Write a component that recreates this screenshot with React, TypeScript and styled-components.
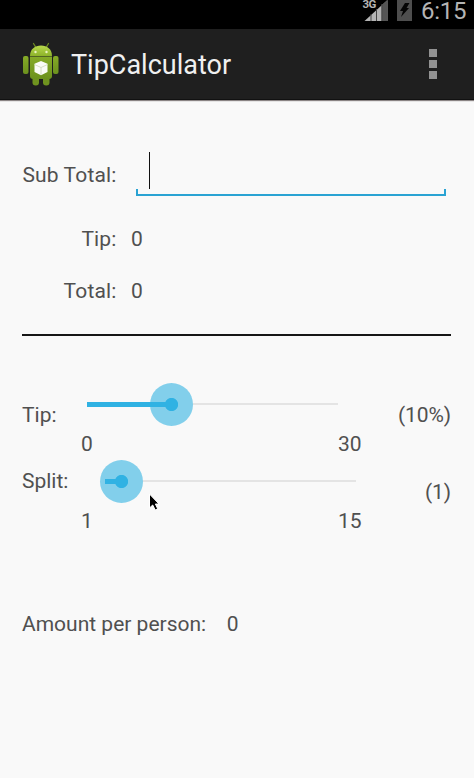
import React from 'react';
import styled, { createGlobalStyle } from 'styled-components';

const GlobalStyle = createGlobalStyle`
  * { box-sizing: border-box; }
  body { margin: 0; background: #f9f9f9; overflow: hidden; }
`;

const Screen = styled.div`
  position: relative;
  display: flex;
  flex-direction: column;
  width: 474px;
  height: 778px;
  background: #f9f9f9;
  color: #505050;
  font: 21px/26px Roboto, sans-serif;
  overflow: hidden;
`;

const StatusBar = styled.div`
  display: flex;
  justify-content: flex-end;
  height: 29px;
  flex: none;
  padding-right: 7px;
  background: #000;
`;

const StatusIcons = styled.svg`
  width: 56px;
  height: 24px;
  margin-right: 3px;
`;

const Clock = styled.span`
  width: 46px;
  color: #b4b4b4;
  font-size: 24px;
  line-height: 22px;
  letter-spacing: -0.3px;
  white-space: nowrap;
`;

const ActionBar = styled.header`
  display: flex;
  align-items: center;
  height: 71px;
  flex: none;
  padding: 0 37px 0 22px;
  background: #1f1f1f;
  border-bottom: 1px solid #111;
  box-shadow: 0 1px 1px #8a8484;
`;

const RobotIcon = styled.svg`
  width: 38px;
  height: 44px;
`;

const Title = styled.h1`
  flex: 1;
  margin: 2px 0 0 11px;
  color: #f0f0f0;
  font-size: 27px;
  font-weight: 400;
  line-height: 34px;
`;

const Overflow = styled.div`
  display: flex;
  flex-direction: column;
  gap: 3px;
`;

const OverflowDot = styled.i`
  width: 8px;
  height: 8px;
  background: #929292;
`;

const Content = styled.main`
  display: flex;
  flex-direction: column;
  padding: 52px 23px 0 22px;
`;

const Field = styled.div<{ $height: number }>`
  display: flex;
  height: ${(p) => p.$height}px;
`;

const FieldLabel = styled.span<{ $top?: number }>`
  width: 94.5px;
  padding-top: ${(p) => p.$top ?? 0}px;
  letter-spacing: 0.15px;
  text-align: right;
  white-space: nowrap;
`;

const FieldValue = styled.span`
  margin-left: 14.5px;
`;

const Input = styled.div`
  display: flex;
  flex-direction: column;
  justify-content: space-between;
  width: 310px;
  height: 44px;
  margin-left: 19.5px;
`;

const Caret = styled.span`
  width: 1px;
  height: 37px;
  margin-left: 13px;
  background: #111;
`;

const Underline = styled.span`
  height: 7px;
  border: 2px solid #2aa3d3;
  border-top: 0;
`;

const Divider = styled.hr`
  width: 429px;
  height: 2px;
  margin: 0;
  border: 0;
  background: #161616;
`;

const Sliders = styled.div`
  margin-top: 47px;
`;

const SliderRow = styled.section`
  display: flex;
  height: 77px;
`;

const SliderLabel = styled.span<{ $top: number }>`
  width: 54px;
  padding-top: ${(p) => p.$top}px;
  white-space: nowrap;
`;

const SliderBody = styled.div`
  display: flex;
  flex-direction: column;
  width: 288px;
`;

const Track = styled.div<{ $offset: number }>`
  position: relative;
  display: flex;
  align-items: center;
  width: 251px;
  height: 42px;
  margin-left: ${(p) => p.$offset}px;

  &::before {
    content: '';
    width: 100%;
    height: 2px;
    background: #e4e4e4;
  }
`;

const Thumb = styled.span<{ $at: number }>`
  position: absolute;
  left: ${(p) => p.$at - 21.5}px;
  top: 0;
  width: 43px;
  height: 43px;
  border-radius: 50%;
  background: radial-gradient(circle, #30b2e3 6.2px, #82cfeb 7px);
`;

const Fill = styled.span<{ $width: number }>`
  position: absolute;
  left: 0;
  top: 19px;
  width: ${(p) => p.$width}px;
  height: 5px;
  background: #30b2e3;
`;

const Scale = styled.div`
  display: flex;
  justify-content: space-between;
  width: 285.5px;
  margin-top: 6px;
  padding-left: 5px;
`;

const SliderValue = styled.span`
  flex: 1;
  padding-top: 19px;
  letter-spacing: -0.1px;
  text-align: right;
`;

const Summary = styled.div`
  display: flex;
  gap: 20.5px;
  margin-top: 74px;
`;

const Pointer = styled.svg`
  position: absolute;
  left: 147px;
  top: 492px;
  width: 14px;
  height: 21px;
`;

type SliderProps = {
  label: string;
  min: string;
  max: string;
  value: string;
  labelTop: number;
  offset: number;
  at: number;
};

function Slider({ label, min, max, value, labelTop, offset, at }: SliderProps) {
  return (
    <SliderRow>
      <SliderLabel $top={labelTop}>{label}</SliderLabel>
      <SliderBody>
        <Track $offset={offset}>
          <Thumb $at={at} />
          <Fill $width={at} />
        </Track>
        <Scale><span>{min}</span><span>{max}</span></Scale>
      </SliderBody>
      <SliderValue>{value}</SliderValue>
    </SliderRow>
  );
}

function Robot() {
  return (
    <RobotIcon viewBox="0 0 38 44">
      <defs>
        <linearGradient id="head" x1="0" y1="0" x2="0" y2="1">
          <stop offset="0" stopColor="#b9d94c" /><stop offset="1" stopColor="#8db32a" />
        </linearGradient>
        <linearGradient id="body" x1="0" y1="0" x2="0" y2="1">
          <stop offset="0" stopColor="#86ab27" /><stop offset="1" stopColor="#6c911e" />
        </linearGradient>
      </defs>
      <path d="M11.500 1.500l3 5M26.500 1.500l-3 5" stroke="#6d8a22" strokeWidth="1.300" strokeLinecap="round" />
      <path d="M8 14C8 7 13 3.500 19 3.500S30 7 30 14z" fill="url(#head)" />
      <circle cx="13.500" cy="10" r="1.200" fill="#eaf4c0" />
      <circle cx="24.500" cy="10" r="1.200" fill="#eaf4c0" />
      <rect x="1" y="14" width="5.500" height="18" rx="2" fill="url(#body)" />
      <rect x="31" y="14" width="5.500" height="18" rx="2" fill="url(#body)" />
      <rect x="10.500" y="32" width="6.500" height="11.500" rx="3" fill="#6f931f" />
      <rect x="21" y="32" width="6.500" height="11.500" rx="3" fill="#6f931f" />
      <path d="M8 14.600h22v19.400q0 3-3 3H11q-3 0-3-3z" fill="url(#body)" />
      <path d="M19 19l6.500 2.800V30L19 33.200 12.500 30v-8.200z" fill="#fafbf7" />
      <path d="M12.500 22.500l6.500 3 6.500-3M19 25.500v7.500" fill="none" stroke="#ccd6b8" strokeWidth=".8" />
    </RobotIcon>
  );
}

export default function App() {
  return (
    <>
      <GlobalStyle />
      <Screen>
        <StatusBar>
          <StatusIcons viewBox="0 0 56 24">
            <path d="M2.500 21L25.500 0v21z" fill="#b4b4b4" />
            <path d="M20 5L25.500 0v21H20z" fill="#555" />
            <path d="M9 14v7M14.500 9v12M19.800 4v17" stroke="#444" strokeWidth="1" />
            <path d="M0 0h15v7l-2 2H0z" fill="#000" />
            <text x="0.500" y="8" fill="#b4b4b4" fontSize="11.500" letterSpacing="-0.500" fontWeight="700" fontFamily="Roboto, sans-serif">3G</text>
            <rect x="35" y="0" width="15" height="21" fill="#4e4e4e" />
            <path d="M43 3h4.500l-3 5H47l-8 9 2-6h-3z" fill="#050505" />
          </StatusIcons>
          <Clock>6:15</Clock>
        </StatusBar>
        <ActionBar>
          <Robot />
          <Title>TipCalculator</Title>
          <Overflow><OverflowDot /><OverflowDot /><OverflowDot /></Overflow>
        </ActionBar>
        <Content>
          <Field $height={74}>
            <FieldLabel $top={10}>Sub Total:</FieldLabel>
            <Input><Caret /><Underline /></Input>
          </Field>
          <Field $height={52}><FieldLabel>Tip:</FieldLabel><FieldValue>0</FieldValue></Field>
          <Field $height={56}><FieldLabel>Total:</FieldLabel><FieldValue>0</FieldValue></Field>
          <Divider />
          <Sliders>
            <Slider label="Tip:" min="0" max="30" value="(10%)" labelTop={19} offset={11} at={84} />
            <Slider label="Split:" min="1" max="15" value="(1)" labelTop={8} offset={29} at={16} />
          </Sliders>
          <Summary><span>Amount per person:</span><span>0</span></Summary>
        </Content>
        <Pointer viewBox="0 0 14 21">
          <path d="M2.500 2v14l3.200-3 2.500 5 2.500-1.200-2.300-4.800h3.600z" fill="#000" stroke="#fff" strokeWidth="1" />
        </Pointer>
      </Screen>
    </>
  );
}
